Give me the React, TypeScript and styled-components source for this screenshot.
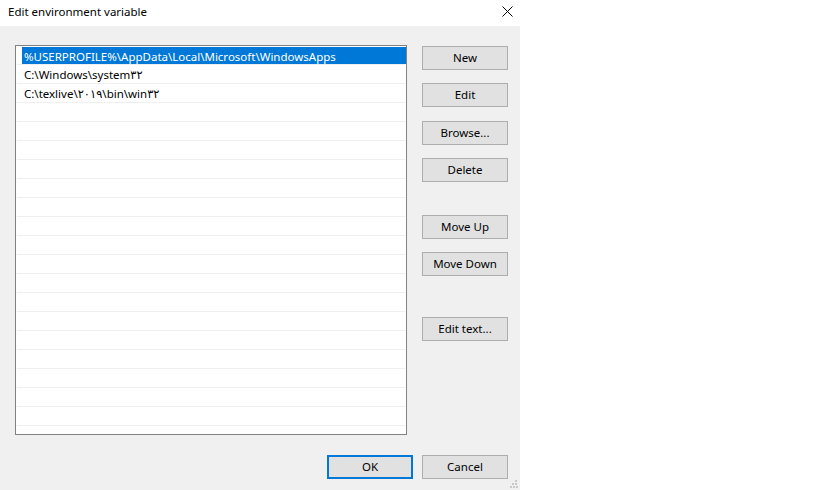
import React from "react";
import styled, { createGlobalStyle } from "styled-components";

const GlobalStyle = createGlobalStyle`
  html, body {
    margin: 0;
    padding: 0;
    background: #ffffff;
  }
  body {
    font-family: "Noto Sans", "DejaVu Sans", sans-serif;
    font-size: 11.5px;
    color: #000;
  }
`;

const entries = [
  "%USERPROFILE%\\AppData\\Local\\Microsoft\\WindowsApps",
  "C:\\Windows\\system۳۲",
  "C:\\texlive\\۲۰۱۹\\bin\\win۳۲",
];

const sideButtons: Array<{ label: string; gap: number }> = [
  { label: "New", gap: 0 },
  { label: "Edit", gap: 13 },
  { label: "Browse...", gap: 14 },
  { label: "Delete", gap: 13 },
  { label: "Move Up", gap: 33 },
  { label: "Move Down", gap: 13 },
  { label: "Edit text...", gap: 41 },
];

const TOTAL_ROWS = 21;

export default function App() {
  const rows = Array.from({ length: TOTAL_ROWS }, (_, i) => entries[i] ?? "");

  return (
    <>
      <GlobalStyle />
      <Dialog>
        <TitleBar>
          <Title>Edit environment variable</Title>
          <CloseBtn type="button" aria-label="Close">
            <svg width="11" height="11" viewBox="0 0 11 11">
              <path d="M0.5 0.5 L10.5 10.5 M10.5 0.5 L0.5 10.5" stroke="#000" strokeWidth="1" fill="none" />
            </svg>
          </CloseBtn>
        </TitleBar>

        <Body>
          <Main>
            <ListBox>
              {rows.map((text, i) => (
                <Row key={i}>
                  <RowInner $selected={i === 0}>{text}</RowInner>
                </Row>
              ))}
            </ListBox>

            <SideColumn>
              {sideButtons.map((b) => (
                <Button key={b.label} type="button" $gap={b.gap}>
                  {b.label}
                </Button>
              ))}
            </SideColumn>
          </Main>

          <Footer>
            <Button type="button" $default>
              OK
            </Button>
            <Button type="button">Cancel</Button>
          </Footer>

          <Grip width="8" height="8" viewBox="0 0 8 8">
            <rect x="5" y="0" width="2" height="2" fill="#c8c8c8" />
            <rect x="2" y="3" width="2" height="2" fill="#c8c8c8" />
            <rect x="5" y="3" width="2" height="2" fill="#c8c8c8" />
            <rect x="0" y="6" width="2" height="2" fill="#c8c8c8" />
            <rect x="3" y="6" width="2" height="2" fill="#c8c8c8" />
            <rect x="6" y="6" width="2" height="2" fill="#c8c8c8" />
          </Grip>
        </Body>
      </Dialog>
    </>
  );
}

// --- Styled Components ---
const Dialog = styled.div`
  width: 520px;
  height: 490px;
  display: flex;
  flex-direction: column;
`;

const TitleBar = styled.div`
  height: 26px;
  background: #ffffff;
  display: flex;
  align-items: center;
  justify-content: space-between;
  padding: 0 7px 4px 8px;
  box-sizing: border-box;
`;

const Title = styled.span`
  font-size: 11.5px;
  color: #000;
`;

const CloseBtn = styled.button`
  background: none;
  border: none;
  padding: 0;
  width: 11px;
  height: 11px;
  display: flex;
  cursor: pointer;
`;

const Body = styled.div`
  position: relative;
  flex: 1;
  background: #f0f0f0;
  padding: 19px 12px 11px 15px;
  box-sizing: border-box;
  display: flex;
  flex-direction: column;
`;

const Main = styled.div`
  display: flex;
  gap: 15px;
  align-items: flex-start;
`;

const ListBox = styled.div`
  width: 392px;
  height: 390px;
  box-sizing: border-box;
  border: 1px solid #828282;
  background: #ffffff;
  overflow: hidden;
`;

const Row = styled.div`
  height: 19px;
  box-sizing: border-box;
  border-bottom: 1px solid #efefef;
  padding: 0 0 0 5px;
  margin-left: 1px;
  margin-right: 1px;
  display: flex;
`;

const RowInner = styled.div<{ $selected?: boolean }>`
  flex: 1;
  display: flex;
  align-items: center;
  padding-left: 2px;
  margin-top: ${(p) => (p.$selected ? "1px" : "0")};
  margin-right: -1px;
  background: ${(p) => (p.$selected ? "#0078d7" : "transparent")};
  color: ${(p) => (p.$selected ? "#ffffff" : "#000000")};
  font-size: 11.5px;
  white-space: nowrap;
  line-height: 17px;
  padding-top: 1px;
  box-sizing: border-box;
`;

const SideColumn = styled.div`
  display: flex;
  flex-direction: column;
  padding-top: 1px;
`;

const Button = styled.button<{ $gap?: number; $default?: boolean }>`
  width: 86px;
  height: 24px;
  margin-top: ${(p) => p.$gap ?? 0}px;
  box-sizing: border-box;
  background: #e1e1e1;
  border: ${(p) => (p.$default ? "2px solid #0078d7" : "1px solid #adadad")};
  color: #000;
  font-family: "Noto Sans", "DejaVu Sans", sans-serif;
  font-size: 11.5px;
  padding: 0 0 1px;
  cursor: pointer;
  display: flex;
  align-items: center;
  justify-content: center;
`;

const Footer = styled.div`
  margin-top: 20px;
  display: flex;
  justify-content: flex-end;
  gap: 9px;
`;

const Grip = styled.svg`
  position: absolute;
  right: 2px;
  bottom: 2px;
`;
